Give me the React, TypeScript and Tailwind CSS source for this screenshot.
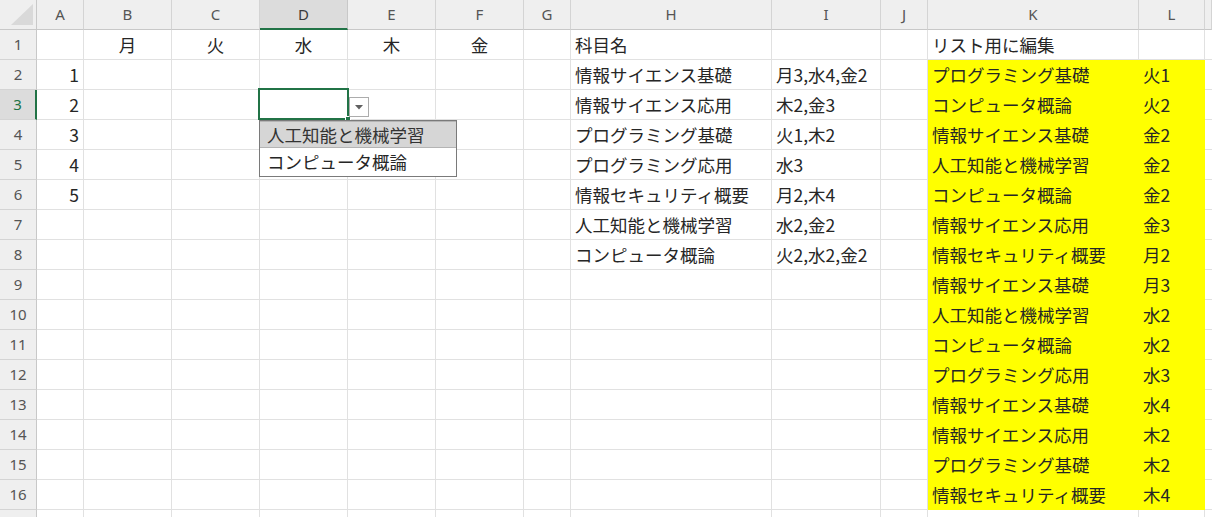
import React from 'react';

const COLS = ['A', 'B', 'C', 'D', 'E', 'F', 'G', 'H', 'I', 'J', 'K', 'L', 'M'];
const GRID = 'grid grid-cols-[37px_47px_88px_88px_88px_88px_88px_47px_201px_109px_47px_211px_66px_1fr]';
const FONT = { fontFamily: '"Noto Sans CJK JP", "Noto Sans", sans-serif' };
const HEAD_FONT = { fontFamily: '"Noto Sans", "Open Sans", sans-serif' };

const SUBJECTS: [string, string][] = [
  ['情報サイエンス基礎', '月3,水4,金2'],
  ['情報サイエンス応用', '木2,金3'],
  ['プログラミング基礎', '火1,木2'],
  ['プログラミング応用', '水3'],
  ['情報セキュリティ概要', '月2,木4'],
  ['人工知能と機械学習', '水2,金2'],
  ['コンピュータ概論', '火2,水2,金2'],
];

const LIST: [string, string][] = [
  ['プログラミング基礎', '火1'],
  ['コンピュータ概論', '火2'],
  ['情報サイエンス基礎', '金2'],
  ['人工知能と機械学習', '金2'],
  ['コンピュータ概論', '金2'],
  ['情報サイエンス応用', '金3'],
  ['情報セキュリティ概要', '月2'],
  ['情報サイエンス基礎', '月3'],
  ['人工知能と機械学習', '水2'],
  ['コンピュータ概論', '水2'],
  ['プログラミング応用', '水3'],
  ['情報サイエンス基礎', '水4'],
  ['情報サイエンス応用', '木2'],
  ['プログラミング基礎', '木2'],
  ['情報セキュリティ概要', '木4'],
];

type Cell = { text?: string; align?: 'left' | 'center' | 'right'; fill?: boolean };

function buildRow(r: number): Cell[] {
  const cells: Cell[] = COLS.map(() => ({}));
  if (r === 1) {
    ['月', '火', '水', '木', '金'].forEach((d, i) => {
      cells[1 + i] = { text: d, align: 'center' };
    });
    cells[7] = { text: '科目名' };
    cells[10] = { text: 'リスト用に編集' };
  }
  if (r >= 2 && r <= 6) cells[0] = { text: String(r - 1), align: 'right' };
  const s = SUBJECTS[r - 2];
  if (s) {
    cells[7] = { text: s[0] };
    cells[8] = { text: s[1] };
  }
  const l = LIST[r - 2];
  if (l) {
    cells[10] = { text: l[0], fill: true };
    cells[11] = { text: l[1], fill: true };
  }
  return cells;
}

export default function App() {
  const rows = Array.from({ length: 17 }, (_, i) => i + 1);

  return (
    <div className="relative w-[1212px] h-[517px] overflow-hidden bg-white text-[#262626]" style={FONT}>
      {/* column headers */}
      <div className={`${GRID} h-[30px]`}>
        <div className="relative bg-[#efefef] border-r border-b border-[#c8c8c8]">
          <svg className="absolute inset-0" width="37" height="30" viewBox="0 0 37 30">
            <polygon points="11,25 33,25 33,4" fill="#d9d9d9" />
          </svg>
        </div>
        {COLS.map((c) => (
          <div
            key={c}
            className={
              c === 'D'
                ? 'flex items-center justify-center bg-[#dcdcdc] border-r border-[#c8c8c8] border-b-2 border-b-[#217346] text-[15px] text-[#3a3a3a]'
                : 'flex items-center justify-center bg-[#efefef] border-r border-b border-[#d4d4d4] border-b-[#c8c8c8] text-[15px] text-[#555]'
            }
            style={HEAD_FONT}
          >
            {c === 'M' ? '' : c}
          </div>
        ))}
      </div>

      {/* rows */}
      {rows.map((r) => {
        const cells = buildRow(r);
        return (
          <div key={r} className={`${GRID} h-[30px]`}>
            <div
              className={
                r === 3
                  ? 'flex items-center justify-center bg-[#dcdcdc] border-b border-[#d4d4d4] border-r-2 border-r-[#217346] text-[15px] text-[#217346]'
                  : 'flex items-center justify-center bg-[#efefef] border-r border-b border-[#d4d4d4] border-r-[#c8c8c8] text-[15px] text-[#555]'
              }
              style={HEAD_FONT}
            >
              {r < 17 ? r : ''}
            </div>
            {cells.map((cell, i) => (
              <div
                key={i}
                className={[
                  'flex items-center whitespace-nowrap overflow-hidden px-[4px] text-[17.5px] leading-none border-r border-b',
                  cell.fill ? 'bg-[#ffff00] border-[#ffff00]' : 'border-[#e1e1e1]',
                  cell.align === 'center' ? 'justify-center' : cell.align === 'right' ? 'justify-end' : 'justify-start',
                ].join(' ')}
              >
                {cell.text}
              </div>
            ))}
          </div>
        );
      })}

      {/* active cell D3 */}
      <div className="absolute left-[258px] top-[88px] w-[91px] h-[32px] border-2 border-[#217346]" />
      <div className="absolute left-[345px] top-[116px] w-[6px] h-[6px] bg-[#217346] border border-white" />

      {/* dropdown button */}
      <div className="absolute left-[349px] top-[97px] w-[20px] h-[20px] bg-white border border-[#acacac] flex items-center justify-center">
        <svg width="8" height="5" viewBox="0 0 8 5">
          <polygon points="0,0 8,0 4,4.5" fill="#606060" />
        </svg>
      </div>

      {/* dropdown list */}
      <div className="absolute left-[259px] top-[120px] w-[198px] h-[57px] bg-white border border-[#7a7a7a] flex flex-col text-[17.5px] leading-none">
        <div className="h-[27px] flex items-center pl-[7px] bg-[#d6d6d6] border-y border-[#b4b4b4] text-[#333]">
          人工知能と機械学習
        </div>
        <div className="h-[28px] flex items-center pl-[7px] text-[#262626]">コンピュータ概論</div>
      </div>
    </div>
  );
}
